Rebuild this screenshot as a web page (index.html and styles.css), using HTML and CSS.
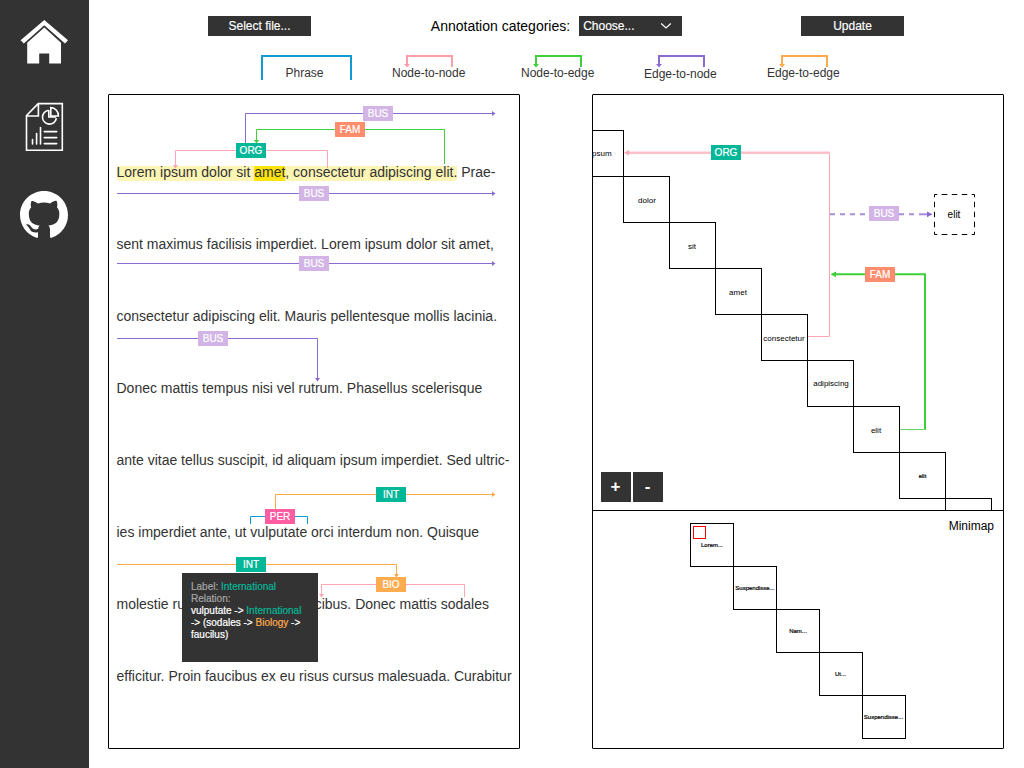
FILE: index.html
```html
<!DOCTYPE html>
<html lang="en">
<head>
<meta charset="utf-8">
<title>Text annotation viewer</title>
<link rel="stylesheet" href="styles.css">
</head>
<body>
<div class="app">
  <nav class="sidebar">
    <a class="nav-link"><svg viewBox="20 19 49 46" width="49" height="46"><path d="M20.6 40.2 44.3 20 68 40.2 65 43.4 44.3 25.2 23.8 43.4Z"/><path d="M27.2 42.8 44.3 27.6 61 42.8V63.5H49.2V53.4H39.2V63.5H27.2Z"/></svg></a>
    <a class="nav-link"><svg class="outline" viewBox="20 102 49 50" width="49" height="50"><path d="M26.5 115.5 38.2 103.6H62.3V150.2H26.5ZM38.4 104V116H27"/><path d="M48.5 110.2A7 7 0 1 0 56.4 118.2M50.8 107.6A7.8 7.8 0 0 1 58.4 116H50.8Z"/><path d="M48.8 110V117H56"/><path class="round" d="M32.5 139.5V144M36.6 133.5V144M40.5 127.5V144M44.3 131.6H56.7M44.3 137.6H56.7M44.3 143.6H56.7"/></svg></a>
    <a class="nav-link"><svg class="github" viewBox="0 0 16 16" width="48" height="48"><path d="M8 0C3.58 0 0 3.58 0 8c0 3.54 2.29 6.53 5.47 7.59.4.07.55-.17.55-.38 0-.19-.01-.82-.01-1.49-2.01.37-2.53-.49-2.69-.94-.09-.23-.48-.94-.82-1.13-.28-.15-.68-.52-.01-.53.63-.01 1.08.58 1.23.82.72 1.21 1.87.87 2.33.66.07-.52.28-.87.51-1.07-1.78-.2-3.64-.89-3.64-3.95 0-.87.31-1.59.82-2.15-.08-.2-.36-1.02.08-2.12 0 0 .67-.21 2.2.82.64-.18 1.32-.27 2-.27s1.36.09 2 .27c1.53-1.04 2.2-.82 2.2-.82.44 1.1.16 1.92.08 2.12.51.56.82 1.27.82 2.15 0 3.07-1.87 3.75-3.65 3.95.29.25.54.73.54 1.48 0 1.07-.01 1.93-.01 2.2 0 .21.15.46.55.38A8.01 8.01 0 0 0 16 8c0-4.42-3.58-8-8-8Z"/></svg></a>
  </nav>
  <main class="main">
    <header class="toolbar">
      <div class="button">Select file...</div>
      <div class="field"><span>Annotation categories:</span>
        <div class="button select">Choose...<svg width="12" height="8" viewBox="0 0 12 8"><path d="M1.2 1.5 6 6 10.8 1.5" fill="none" stroke="#fff" stroke-width="1.2"/></svg></div>
      </div>
      <div class="button">Update</div>
    </header>
    <div class="legend">
      <div class="key phrase">Phrase</div>
      <div class="key blush"><svg width="48" height="13"><path d="M1 10V1H46V12"/><path class="tip" d="M-2 9H4L1 12.5Z"/></svg>Node-to-node</div>
      <div class="key green"><svg width="48" height="13"><path d="M1 10V1H46V12"/><path class="tip" d="M-2 9H4L1 12.5Z"/></svg>Node-to-edge</div>
      <div class="key violet"><svg width="48" height="13"><path d="M1 10V1H46V12"/><path class="tip" d="M-2 9H4L1 12.5Z"/></svg>Edge-to-node</div>
      <div class="key amber"><svg width="48" height="13"><path d="M1 10V1H46V12"/><path class="tip" d="M-2 9H4L1 12.5Z"/></svg>Edge-to-edge</div>
    </div>
    <div class="panels">
      <section class="panel document">
        <div class="lines">
          <p><mark>Lorem ipsum dolor sit <mark class="focus">amet</mark>, consectetur adipiscing elit.</mark> Prae-</p>
          <p>sent maximus facilisis imperdiet. Lorem ipsum dolor sit amet,</p>
          <p>consectetur adipiscing elit. Mauris pellentesque mollis lacinia.</p>
          <p>Donec mattis tempus nisi vel rutrum. Phasellus scelerisque</p>
          <p>ante vitae tellus suscipit, id aliquam ipsum imperdiet. Sed ultric-</p>
          <p>ies imperdiet ante, ut vulputate orci interdum non. Quisque</p>
          <p class="split"><span>molestie ru</span><span>cibus. Donec mattis sodales</span></p>
          <p>efficitur. Proin faucibus ex eu risus cursus malesuada. Curabitur</p>
        </div>
        <svg class="arcs" viewBox="109 95 410 653" width="410" height="653">
          <g class="violet">
            <path d="M245.5 143V113.5H494M117 193.5H494M117 263.5H494M117 338.5H317.5V380"/>
            <path class="tip" d="M492 111 495.5 113.5 492 116ZM492 191 495.5 193.5 492 196ZM492 261 495.5 263.5 492 266ZM315 378 317.5 381.5 320 378Z"/>
          </g>
          <g class="green"><path d="M444.5 164V129.5H256.5V141"/><path class="tip" d="M253.8 140H259.2L256.5 143.5Z"/></g>
          <g class="pink"><path d="M327.5 168V150.5H175.5V166"/><path class="tip" d="M173 165H178L175.5 168.5Z"/></g>
          <g class="amber"><path d="M275.5 509V494.5H494M117 564.5H396.5V576"/><path class="tip" d="M492 492 495.5 494.5 492 497ZM394 574H399L396.5 577.5Z"/></g>
          <g class="blue"><path d="M250.5 524V516.5H307.5V524"/></g>
          <g class="pink"><path d="M464.5 597V584.5H321.5V596"/><path class="tip" d="M319 594H324L321.5 597.5Z"/></g>
          <g class="tag">
            <rect class="bus" x="363" y="106"/><text x="378" y="117">BUS</text>
            <rect class="fam" x="335" y="122"/><text x="350" y="133">FAM</text>
            <rect class="org" x="236" y="143"/><text x="251" y="154">ORG</text>
            <rect class="bus" x="299" y="186"/><text x="314" y="197">BUS</text>
            <rect class="bus" x="299" y="256"/><text x="314" y="267">BUS</text>
            <rect class="bus" x="198" y="331"/><text x="213" y="342">BUS</text>
            <rect class="org" x="376" y="487"/><text x="391" y="498">INT</text>
            <rect class="per" x="265" y="509"/><text x="280" y="520">PER</text>
            <rect class="org" x="236" y="557"/><text x="251" y="568">INT</text>
            <rect class="bio" x="376" y="577"/><text x="391" y="588">BIO</text>
          </g>
        </svg>
        <div class="tooltip">
          <div class="muted">Label: <span class="t-int">International</span></div>
          <div class="muted">Relation:</div>
          <div>vulputate -&gt; <span class="t-int">International</span></div>
          <div>-&gt; (sodales -&gt; <span class="t-bio">Biology</span> -&gt;</div>
          <div>faucilus)</div>
        </div>
      </section>
      <section class="panel views">
        <div class="map">
          <svg viewBox="593 95 410 415" width="410" height="415">
            <g class="nodes">
              <rect x="577.5" y="130.5"/><rect x="623.5" y="176.5"/><rect x="669.5" y="222.5"/><rect x="715.5" y="268.5"/><rect x="761.5" y="314.5"/><rect x="807.5" y="360.5"/><rect x="853.5" y="406.5"/><rect x="899.5" y="452.5"/><rect x="945.5" y="498.5"/>
              <text x="601" y="156">ipsum</text><text x="647" y="203">dolor</text><text x="692" y="249">sit</text><text x="738" y="295">amet</text><text x="784" y="341">consectetur</text><text x="831" y="386">adipiscing</text><text x="876" y="433">elit</text><text class="small" x="922.5" y="478">elit</text>
            </g>
            <g class="pink"><path d="M829.5 153V336.5H808"/><path class="soft" d="M627 152.7H830"/><path class="tip" d="M629 150 624 152.7 629 155.4Z"/></g>
            <g class="violet dashes"><path d="M830 214.3H868M899 214.3H917"/><path class="solid" d="M919 214.3H928"/><path class="tip" d="M927 211.5 932.5 214.3 927 217.2Z"/></g>
            <g class="green"><path class="thick" d="M834 274.3H925V429"/><path class="thin" d="M900 429.5H926"/><path class="tip" d="M836 271.5 830.5 274.3 836 277.2Z"/></g>
            <rect class="ghost" x="934.5" y="194.5" width="40" height="40"/>
            <text class="ghost-label" x="954" y="218">elit</text>
            <g class="tag">
              <rect class="org" x="711" y="145"/><text x="726" y="156">ORG</text>
              <rect class="bus" x="869" y="206"/><text x="884" y="217">BUS</text>
              <rect class="fam" x="865" y="267"/><text x="880" y="278">FAM</text>
            </g>
          </svg>
          <div class="zoom"><div>+</div><div>-</div></div>
        </div>
        <div class="minimap">
          <svg viewBox="593 511 410 237" width="410" height="237">
            <g class="cells">
              <rect x="690.5" y="523.5"/><rect x="733.5" y="566.5"/><rect x="776.5" y="609.5"/><rect x="819.5" y="652.5"/><rect x="862.5" y="695.5"/>
              <text x="712" y="547">Lorem...</text><text x="755" y="590">Suspendisse...</text><text x="798" y="633">Nam...</text><text x="840.5" y="676">Ut...</text><text x="883.5" y="719">Suspendisse...</text>
            </g>
            <rect class="viewport" x="693.5" y="526.5" width="12" height="12"/>
          </svg>
          <span class="caption">Minimap</span>
        </div>
      </section>
    </div>
  </main>
</div>
</body>
</html>
```

FILE: styles.css
```css
* { box-sizing: border-box; }
body { margin: 0; background: #fff; font-family: "Liberation Sans", Arial, sans-serif; color: #333; }
svg { display: block; }
p { margin: 0; }

.app { display: flex; width: 1024px; height: 768px; overflow: hidden; }
.sidebar { width: 89px; flex: none; background: #333; display: flex; flex-direction: column; align-items: center; padding-top: 19px; }
.nav-link { fill: #fff; margin-bottom: 37px; }
.nav-link + .nav-link { margin-bottom: 39px; }
.outline { fill: none; stroke: #fff; stroke-width: 1.6; }
.round { stroke-linecap: round; }
.github { margin-right: 1px; }

.main { flex: 1; display: flex; flex-direction: column; padding: 16px 20px 0 19px; }
.toolbar { display: flex; justify-content: space-between; padding: 0 100px; height: 20px; }
.button { width: 103px; height: 20px; background: #333; color: #fff; font-size: 12px; line-height: 20px; text-align: center; -webkit-text-stroke: .15px; }
.field { display: flex; gap: 9px; font-size: 14px; line-height: 21px; color: #000; margin-left: 1px; }
.select { display: flex; justify-content: space-between; align-items: center; padding: 0 10px 0 4px; }

.legend { display: flex; height: 25px; margin: 19px 0 14px 153px; font-size: 12px; }
.key { display: flex; flex-direction: column; width: 74px; line-height: 14px; white-space: nowrap; color: #333; }
.key svg { margin: 0 0 -2px 14px; overflow: visible; fill: none; stroke: currentColor; stroke-width: 2; }
.phrase { width: 91px; height: 25px; border: 2px solid #0f9bd0; border-bottom: 0; padding: 9px 4px 0 0; align-items: center; margin-right: 40px; }
.key.blush { margin-right: 55px; }
.key.green { margin-right: 49px; }
.key.violet { margin-right: 49px; }
.key.violet svg { margin-bottom: -1px; }
.blush svg { color: #ff9dab; }
.key.green svg { color: #3ecf3a; }
.key.violet svg { color: #8b6bd2; }
.key.amber svg { color: #fda94e; }
.key svg path { stroke: currentColor; }
.key svg .tip { fill: currentColor; stroke: none; }

.panels { display: flex; justify-content: space-between; width: 896px; height: 655px; }
.panel { position: relative; width: 412px; height: 655px; border: 1px solid #000; border-radius: 1px; }
.lines { padding: 41px 0 0 7.5px; font-size: 14px; line-height: 72px; white-space: nowrap; }
.split { display: flex; justify-content: space-between; width: 372.5px; }
mark { color: inherit; border-radius: 3px; background: linear-gradient(#fdf5b4, #fdf5b4) 0 100% / 100% 15px no-repeat; padding-bottom: 1px; }
.focus { background: linear-gradient(#fee30f, #fee30f) 0 100% / 100% 15px no-repeat; border-radius: 1px; }
.arcs { position: absolute; left: 0; top: 0; }

.arcs path, .map path { fill: none; stroke-width: 1; }
.violet path { stroke: #8b6bd2; }
.green path { stroke: #3ecf3a; }
.pink path { stroke: #ffa5b3; }
.amber path { stroke: #fda94e; }
.blue path { stroke: #0f9bd0; }
.panel .tip { stroke: none; }
.violet .tip { fill: #8b6bd2; }
.green .tip { fill: #3ecf3a; }
.pink .tip { fill: #ffa5b3; }
.amber .tip { fill: #fda94e; }

.tag rect { width: 30px; height: 15px; }
.tag text { fill: #fff; stroke: #fff; stroke-width: .2px; font-size: 10px; text-anchor: middle; }
.bus { fill: #d2b5e6; }
.fam { fill: #ff8c6c; }
.org { fill: #04b798; }
.per { fill: #ff5ca2; }
.bio { fill: #ffab50; }

.tooltip { position: absolute; left: 73px; top: 478px; width: 136px; height: 89px; background: #333; color: #fff; padding: 8px 9px; font-size: 10px; line-height: 12px; white-space: nowrap; -webkit-text-stroke: .2px; }
.muted { color: #a6a6a6; }
.t-int { color: #04b798; }
.t-bio { color: #ffab50; }

.views { display: flex; flex-direction: column; }
.map { position: relative; height: 416px; border-bottom: 1px solid #000; }
.minimap { position: relative; height: 237px; }
.nodes rect, .cells rect { fill: none; stroke: #000; }
.nodes rect { width: 46px; height: 46px; }
.cells rect { width: 43px; height: 43px; }
.nodes text { font-size: 8px; text-anchor: middle; fill: #000; }
.nodes .small, .cells text { font-size: 6px; text-anchor: middle; fill: #000; stroke: #000; stroke-width: .2px; }
.map .soft { stroke-width: 2.4; stroke: #ffc0ca; }
.map .thick { stroke-width: 2; }
.map .thin { stroke-opacity: .8; }
.map .dashes path { stroke-width: 2; stroke-dasharray: 5 5; stroke: #a78ddc; }
.map .dashes .solid { stroke-dasharray: none; }
.map .dashes .tip { stroke: none; }
.ghost { fill: #fff; stroke: #000; stroke-width: 1; stroke-dasharray: 5 5 5 5 5 5 5 5; stroke-dasharray: 5.5 4.5; stroke-dashoffset: 2.75; }
.ghost-label { font-size: 10px; text-anchor: middle; fill: #000; }
.viewport { fill: none; stroke: #f00; }
.zoom { position: absolute; left: 8px; bottom: 8px; display: flex; gap: 2px; }
.zoom div { width: 30px; height: 30px; background: #333; color: #fff; font-size: 17px; font-weight: bold; line-height: 29px; text-align: center; padding-right: 1px; }
.caption { position: absolute; right: 9px; top: 8px; font-size: 12px; line-height: 14px; color: #000; }
```
